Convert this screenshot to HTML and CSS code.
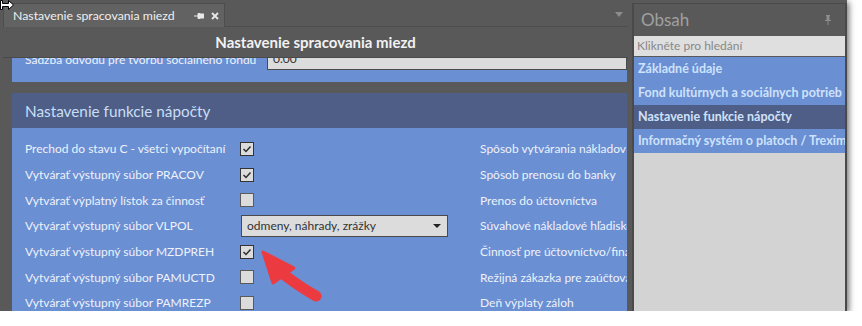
FILE: index.html
```html
<!DOCTYPE html>
<html lang="sk">
<head>
    <meta charset="utf-8">
    <title>Nastavenie spracovania miezd</title>
    <link rel="stylesheet" href="styles.css">
</head>
<body>
    <div class="window">
        <div class="doc">
            <div class="tabstrip">
                <div class="tab">
                    <span class="tab-label">Nastavenie spracovania miezd</span>
                    <svg class="tab-icon" width="10" height="8" viewBox="0 0 10 8"><path d="M0 4h4M4 1.5h2v5H4zM6 2h4v4H6z" fill="#e8e8e8" stroke="#e8e8e8" stroke-width="1"/></svg>
                    <svg class="tab-icon" width="8" height="8" viewBox="0 0 8 8"><path d="M1 1l6 6M7 1l-6 6" stroke="#e8e8e8" stroke-width="1.8"/></svg>
                </div>
                <div class="tabstrip-rest">
                    <svg width="8" height="5" viewBox="0 0 8 5"><path d="M0 0h8L4 5z" fill="#8c8c8c"/></svg>
                </div>
            </div>
            <div class="doc-head">Nastavenie spracovania miezd</div>
            <div class="scroll">
                <div class="scroll-inner">
                    <section class="group group-cut">
                        <div class="cut-row">
                            <span class="cut-label">Sadzba odvodu pre tvorbu sociálneho fondu</span>
                            <span class="field">0.00</span>
                        </div>
                    </section>
                    <section class="group">
                        <h2 class="group-title">Nastavenie funkcie nápočty</h2>
                        <div class="group-body">
                            <span class="lbl">Prechod do stavu C - všetci vypočítaní</span>
                            <span class="ctl"><span class="check on"><svg width="12" height="12" viewBox="0 0 12 12"><path d="M2.5 6l2.5 2.5L9.5 3.5" fill="none" stroke="#2e2e2e" stroke-width="1.5"/></svg></span></span>
                            <span class="lbl">Spôsob vytvárania nákladov pre účtovníctvo</span>

                            <span class="lbl">Vytvárať výstupný súbor PRACOV</span>
                            <span class="ctl"><span class="check on"><svg width="12" height="12" viewBox="0 0 12 12"><path d="M2.5 6l2.5 2.5L9.5 3.5" fill="none" stroke="#2e2e2e" stroke-width="1.5"/></svg></span></span>
                            <span class="lbl">Spôsob prenosu do banky</span>

                            <span class="lbl">Vytvárať výplatný lístok za činnosť</span>
                            <span class="ctl"><span class="check"></span></span>
                            <span class="lbl">Prenos do účtovníctva</span>

                            <span class="lbl">Vytvárať výstupný súbor VLPOL</span>
                            <span class="ctl">
                                <span class="select">odmeny, náhrady, zrážky
                                    <svg width="8" height="4" viewBox="0 0 8 4"><path d="M0 0h8L4 4z" fill="#222"/></svg>
                                </span>
                            </span>
                            <span class="lbl">Súvahové nákladové hľadisko</span>

                            <span class="lbl">Vytvárať výstupný súbor MZDPREH</span>
                            <span class="ctl"><span class="check on"><svg width="12" height="12" viewBox="0 0 12 12"><path d="M2.5 6l2.5 2.5L9.5 3.5" fill="none" stroke="#2e2e2e" stroke-width="1.5"/></svg></span></span>
                            <span class="lbl">Činnosť pre účtovníctvo/finančné</span>

                            <span class="lbl">Vytvárať výstupný súbor PAMUCTD</span>
                            <span class="ctl"><span class="check"></span></span>
                            <span class="lbl">Režijná zákazka pre zaúčtovanie</span>

                            <span class="lbl">Vytvárať výstupný súbor PAMREZP</span>
                            <span class="ctl"><span class="check"></span></span>
                            <span class="lbl">Deň výplaty záloh</span>
                        </div>
                    </section>
                </div>
            </div>
        </div>

        <aside class="panel">
            <div class="panel-title">
                <span>Obsah</span>
                <svg width="6" height="10" viewBox="0 0 6 10"><path d="M1 0h4v1H4.5v4H6v1H0V5h1.5V1H1zM2.5 6h1v4h-1z" fill="#8e8e8e"/></svg>
            </div>
            <div class="search">Klikněte pro hledání</div>
            <ul class="toc">
                <li>Základné údaje</li>
                <li>Fond kultúrnych a sociálnych potrieb</li>
                <li class="current">Nastavenie funkcie nápočty</li>
                <li>Informačný systém o platoch / Trexima</li>
            </ul>
            <div class="panel-rest"></div>
        </aside>

        <!-- annotation arrow drawn over the form -->
        <svg class="pointer" width="70" height="60" viewBox="0 0 70 60">
            <path d="M28 29Q45 42 61 51" fill="none" stroke="#ec3b40" stroke-width="11" stroke-linecap="round"/>
            <path d="M8 7L18 38L39 23z" fill="#ec3b40" stroke="#ec3b40" stroke-width="3" stroke-linejoin="round"/>
        </svg>

        <svg class="cursor" width="14" height="10" viewBox="0 0 14 10"><path d="M0.5 0.5h2v3h6v-3l5 4.5-5 4.5v-3h-6v3h-2z" fill="#fff" stroke="#000" stroke-width="1"/></svg>
    </div>
</body>
</html>
```

FILE: styles.css
```css
html {
    font-family: Lato, "Open Sans", sans-serif;
    font-size: 12px;
}

body {
    margin: 0;
    background: #fff;
    overflow: hidden;
}

.window {
    position: relative;
    display: flex;
    width: 847px;
    height: 311px;
    box-sizing: border-box;
    padding-top: 3px;
    background: #595959;
    box-shadow: 2px 2px 6px rgba(0, 0, 0, .55);
}

/* --- document area --- */

.doc {
    display: flex;
    flex-direction: column;
    width: 625px;
    margin-left: 3px;
    min-height: 0;
}

.tabstrip {
    display: flex;
    flex: none;
    height: 24px;
}

.tab {
    display: flex;
    align-items: center;
    gap: 7px;
    width: 222px;
    box-sizing: border-box;
    padding-left: 9px;
    background: #626262;
    border: 1px solid #4d4d4d;
    border-bottom: none;
    color: #efefef;
    white-space: nowrap;
    font-size: 12.3px;
}

.tab-label {
    width: 174px;
}

.tabstrip-rest {
    display: flex;
    flex: 1;
    justify-content: flex-end;
    align-items: center;
    padding-right: 5px;
    border-bottom: 1px solid #4d4d4d;
}

.doc-head {
    display: flex;
    flex: none;
    height: 31px;
    box-sizing: border-box;
    justify-content: center;
    align-items: center;
    border-bottom: 1px solid #4a4a4a;
    color: #f2f2f2;
    font-size: 15px;
    font-weight: 700;
}

.scroll {
    flex: 1;
    min-height: 0;
    overflow: hidden;
    padding: 0 1px 0 9px;
}

.scroll-inner {
    /* scrolled a bit down */
    margin-top: -12px;
}

.group {
    margin-bottom: 11px;
    background: #6a8fd3;
    overflow: hidden;
}

.group-cut {
    padding-bottom: 10px;
}

.cut-row {
    display: flex;
    align-items: center;
    height: 26px;
    padding-left: 13px;
}

.cut-label {
    width: 242px;
    flex: none;
    color: #eef2fa;
    white-space: nowrap;
}

.field {
    flex: 1;
    height: 22px;
    line-height: 20px;
    box-sizing: border-box;
    padding-left: 5px;
    background: #dcdcdc;
    border: 1px solid #4a4a4a;
    color: #333;
}

.group-title {
    display: flex;
    align-items: center;
    height: 35px;
    margin: 0;
    padding-left: 13px;
    background: #4f5e86;
    color: #c8def7;
    font-size: 15.3px;
    font-weight: 400;
}

.group-body {
    display: grid;
    grid-template-columns: 215px 240px 1fr;
    grid-auto-rows: 25.7px;
    align-items: center;
    padding: 8px 0 0 13px;
}

.lbl {
    color: #eef2fa;
    white-space: nowrap;
    overflow: hidden;
}

.ctl {
    display: flex;
    align-items: center;
}

.check {
    display: flex;
    justify-content: center;
    align-items: center;
    width: 14px;
    height: 14px;
    box-sizing: border-box;
    background: #dcdcdc;
    border: 1px solid #5a5a5a;
}

.check.on {
    border-color: #333;
}

.select {
    display: flex;
    justify-content: space-between;
    align-items: center;
    width: 207px;
    height: 22px;
    box-sizing: border-box;
    margin-left: 1px;
    padding: 0 6px 0 5px;
    background: #dcdcdc;
    border: 1px solid #4a4a4a;
    color: #333;
}

/* --- side panel --- */

.panel {
    display: flex;
    flex-direction: column;
    width: 211px;
    margin-left: 4px;
    border: 2px solid #4a4a4a;
    border-top-width: 1px;
    border-bottom: none;
}

.panel-title {
    display: flex;
    justify-content: space-between;
    align-items: center;
    height: 31px;
    padding: 0 14px 0 7px;
    color: #a0a0a0;
    font-size: 17px;
}

.search {
    height: 20px;
    line-height: 20px;
    margin: 1px 0;
    padding-left: 3px;
    background: #dfdfdf;
    color: #888;
}

.toc {
    margin: 0;
    padding: 0;
    list-style: none;
}

.toc li {
    height: 24px;
    line-height: 24px;
    padding-left: 4px;
    background: #6a8fd3;
    color: #cfe2fb;
    font-size: 12.5px;
    font-weight: 700;
    white-space: nowrap;
    overflow: hidden;
}

.toc li.current {
    background: #4f5e86;
}

.panel-rest {
    flex: 1;
    background: #d3d3d3;
}

/* --- overlays --- */

.pointer {
    position: absolute;
    left: 255px;
    top: 245px;
}

.cursor {
    position: absolute;
    left: 0;
    top: 0;
}
```
